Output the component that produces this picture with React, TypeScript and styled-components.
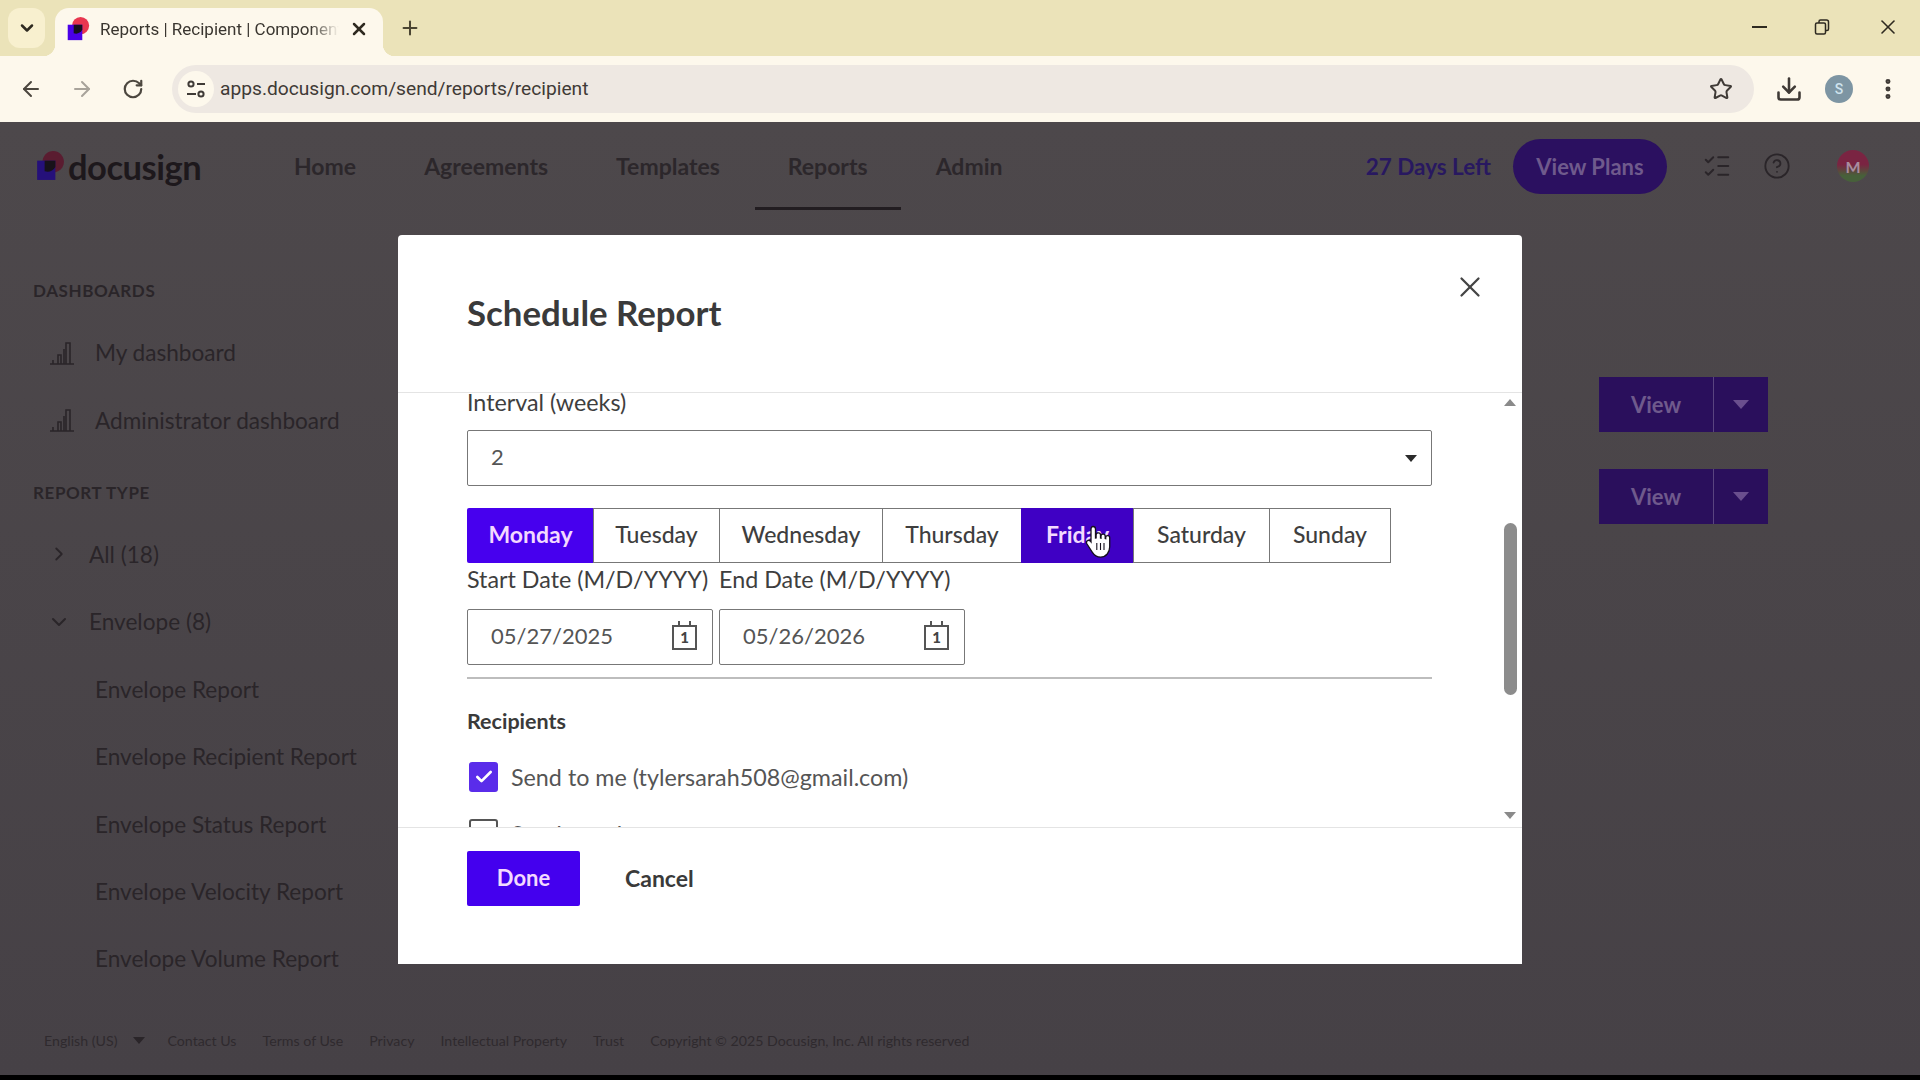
import React from "react";
import styled, { createGlobalStyle } from "styled-components";
import {
  ArrowLeft,
  ArrowRight,
  Check,
  ChevronDown,
  ChevronRight,
  CircleHelp,
  Download,
  EllipsisVertical,
  ListChecks,
  Plus,
  RotateCw,
  Star,
  X,
} from "lucide-react";

const Global = createGlobalStyle`
  html, body { margin: 0; padding: 0; background: #000; }
  * { box-sizing: border-box; }
  body { font-family: Lato, "Liberation Sans", sans-serif; }
`;

const DAYS = [
  { name: "Monday", width: 127, state: "on" },
  { name: "Tuesday", width: 127, state: "off" },
  { name: "Wednesday", width: 164, state: "off" },
  { name: "Thursday", width: 140, state: "off" },
  { name: "Friday", width: 113, state: "hover" },
  { name: "Saturday", width: 137, state: "off" },
  { name: "Sunday", width: 122, state: "off" },
];

const REPORTS = [
  "Envelope Report",
  "Envelope Recipient Report",
  "Envelope Status Report",
  "Envelope Velocity Report",
  "Envelope Volume Report",
];

const FOOTER_LINKS = ["Contact Us", "Terms of Use", "Privacy", "Intellectual Property", "Trust"];

const LogoMark = ({ size, dim }: { size: number; dim?: boolean }) => (
  <svg width={size} height={size} viewBox="0 0 28 28">
    <circle cx="17" cy="10" r="10" fill={dim ? "#5a1c30" : "#e8364f"} />
    <rect x="2" y="9" width="17" height="18" fill={dim ? "#25107a" : "#4a00e8"} />
    <path d="M9 9h10v6a9 9 0 0 1-10 4z" fill={dim ? "#17121a" : "#15101c"} />
  </svg>
);

const BarsIcon = () => (
  <svg width="26" height="26" viewBox="0 0 26 26" fill="none" stroke="#2a2529" strokeWidth="1.6">
    <path d="M1 24h24M4 24v-4M9 24v-9h3v9M15 24V9h0M17 24V3h4v21" />
  </svg>
);

const TuneIcon = () => (
  <svg width="20" height="20" viewBox="0 0 20 20" fill="none" stroke="#3f3a36" strokeWidth="2">
    <circle cx="5" cy="5" r="2.6" />
    <path d="M11 5h8M1 15h9" />
    <circle cx="15" cy="15" r="2.6" />
  </svg>
);

const RestoreIcon = () => (
  <svg width="16" height="16" viewBox="0 0 16 16" fill="none" stroke="#2e2a20" strokeWidth="1.5">
    <rect x="1.5" y="4" width="10" height="11" rx="1.5" />
    <path d="M5 4V2.5A1.5 1.5 0 0 1 6.5 1h6A2 2 0 0 1 14.500 3v7a1.500 1.500 0 0 1-1.500 1.500h-1.500" />
  </svg>
);

const HandCursor = () => (
  <svg width="26" height="36" viewBox="0 0 26 36">
    <path
      d="M8 2.500c1.500 0 2.500 1 2.500 2.500v9l.6-.1V11c0-1.300 1-2.100 2.200-2.100s2.200.9 2.200 2.100v3l.5.1v-2c0-1.200 1-2 2.100-2s2.100.9 2.100 2.100v2.300l.5.1v-1c0-1.100.9-1.900 2-1.900s2 .9 2 2.100v9c0 5.500-3.500 10.300-9 10.300-4.200 0-6.500-1.800-8.500-5L2 20c-.9-1.500-.5-2.800.5-3.400 1.100-.7 2.300-.2 3.100.8l.4.500V5c0-1.500.9-2.500 2-2.500z"
      fill="#fff"
      stroke="#15101c"
      strokeWidth="1.300"
    />
    <path d="M11.800 19v7M15.500 19v7M19 19v7" stroke="#15101c" strokeWidth="1.100" />
  </svg>
);

export default function App() {
  return (
    <Screen>
      <Global />
      <TabStrip>
        <TabSearch>
          <ChevronDown size={20} strokeWidth={3} color="#2e2a20" />
        </TabSearch>
        <Tab>
          <LogoMark size={24} />
          <TabTitle>Reports | Recipient | Component</TabTitle>
          <X size={20} strokeWidth={3} color="#2e2a20" />
        </Tab>
        <NewTab>
          <Plus size={22} strokeWidth={2.2} color="#4a4532" />
        </NewTab>
        <WindowControls>
          <MinimizeBar />
          <RestoreIcon />
          <X size={24} strokeWidth={1.6} color="#2e2a20" />
        </WindowControls>
      </TabStrip>

      <Toolbar>
        <ToolIcon>
          <ArrowLeft size={24} color="#4c473f" strokeWidth={2} />
        </ToolIcon>
        <ToolIcon>
          <ArrowRight size={24} color="#a8a39a" strokeWidth={2} />
        </ToolIcon>
        <ToolIcon>
          <RotateCw size={22} color="#4c473f" strokeWidth={2.4} />
        </ToolIcon>
        <Omnibox>
          <SiteChip>
            <TuneIcon />
          </SiteChip>
          <UrlText>apps.docusign.com/send/reports/recipient</UrlText>
          <Star size={24} color="#3f3a36" strokeWidth={2} />
        </Omnibox>
        <ToolbarEnd>
          <Download size={28} color="#3f3a36" strokeWidth={2.2} />
          <ProfileDot>S</ProfileDot>
          <EllipsisVertical size={26} color="#3f3a36" strokeWidth={2.6} />
        </ToolbarEnd>
      </Toolbar>

      <AppPage>
        <TopNav>
          <Brand>
            <LogoMark size={30} dim />
            <BrandName>docusign</BrandName>
          </Brand>
          <NavList>
            <NavItem>Home</NavItem>
            <NavItem>Agreements</NavItem>
            <NavItem>Templates</NavItem>
            <NavItem $active>Reports</NavItem>
            <NavItem>Admin</NavItem>
          </NavList>
          <NavEnd>
            <DaysLeft>27 Days Left</DaysLeft>
            <PlansButton>View Plans</PlansButton>
            <NavIcon $gap={35}>
              <ListChecks size={30} color="#2a2529" strokeWidth={1.6} />
            </NavIcon>
            <NavIcon $gap={30}>
              <CircleHelp size={28} color="#2a2529" strokeWidth={1.6} />
            </NavIcon>
            <NavAvatar>M</NavAvatar>
          </NavEnd>
        </TopNav>

        <Body>
          <Sidebar>
            <SectionTitle>DASHBOARDS</SectionTitle>
            <SideList>
              <SideRow>
                <BarsIcon />
                My dashboard
              </SideRow>
              <SideRow>
                <BarsIcon />
                Administrator dashboard
              </SideRow>
            </SideList>
            <SectionTitle $top={27}>REPORT TYPE</SectionTitle>
            <SideList>
              <TreeRow>
                <ChevronBox>
                  <ChevronRight size={22} color="#2a2529" strokeWidth={2} />
                </ChevronBox>
                All (18)
              </TreeRow>
              <TreeRow>
                <ChevronBox>
                  <ChevronDown size={24} color="#2a2529" strokeWidth={2} />
                </ChevronBox>
                Envelope (8)
              </TreeRow>
              {REPORTS.map((r) => (
                <SideRow key={r} $indent>
                  {r}
                </SideRow>
              ))}
            </SideList>
          </Sidebar>
          <MainArea>
            {[0, 1].map((i) => (
              <ViewGroup key={i}>
                <ViewButton>View</ViewButton>
                <ViewCaret>
                  <Caret $color="#6a4f8e" />
                </ViewCaret>
              </ViewGroup>
            ))}
          </MainArea>
        </Body>

        <PageFooter>
          <FooterLink>English (US)</FooterLink>
          <FooterCaret>
            <Caret $color="#2a2529" $small />
          </FooterCaret>
          {FOOTER_LINKS.map((l) => (
            <FooterLink key={l}>{l}</FooterLink>
          ))}
          <FooterLink>Copyright © 2025 Docusign, Inc. All rights reserved</FooterLink>
        </PageFooter>

        <Backdrop>
          <Modal>
            <ModalHeader>
              <ModalTitle>Schedule Report</ModalTitle>
              <CloseButton>
                <X size={34} strokeWidth={1.6} color="#444" />
              </CloseButton>
            </ModalHeader>

            <ScrollArea>
              <ModalContent>
                <FieldLabel $after={18}>Interval (weeks)</FieldLabel>
                <SelectBox>
                  <FieldValue>2</FieldValue>
                  <Caret $color="#2b2b2b" $small />
                </SelectBox>
                <DayRow>
                  {DAYS.map((d) => (
                    <DayButton key={d.name} $width={d.width} $state={d.state}>
                      {d.name}
                    </DayButton>
                  ))}
                  <CursorSpot>
                    <HandCursor />
                  </CursorSpot>
                </DayRow>
                <DateRow>
                  <DateField>
                    <FieldLabel $after={20}>Start Date (M/D/YYYY)</FieldLabel>
                    <DateInput>
                      <FieldValue>05/27/2025</FieldValue>
                      <CalendarIcon>1</CalendarIcon>
                    </DateInput>
                  </DateField>
                  <DateField>
                    <FieldLabel $after={20}>End Date (M/D/YYYY)</FieldLabel>
                    <DateInput>
                      <FieldValue>05/26/2026</FieldValue>
                      <CalendarIcon>1</CalendarIcon>
                    </DateInput>
                  </DateField>
                </DateRow>
                <Divider />
                <GroupTitle>Recipients</GroupTitle>
                <CheckRow>
                  <CheckBox $checked>
                    <Check size={20} color="#fff" strokeWidth={3.2} />
                  </CheckBox>
                  Send to me (tylersarah508@gmail.com)
                </CheckRow>
                <CheckRow $top={27}>
                  <CheckBox />
                  Send to others
                </CheckRow>
              </ModalContent>
              <ScrollTrack>
                <ScrollArrow $up />
                <ScrollThumb />
                <ScrollArrow />
              </ScrollTrack>
            </ScrollArea>

            <ModalFooter>
              <DoneButton>Done</DoneButton>
              <CancelButton>Cancel</CancelButton>
            </ModalFooter>
          </Modal>
        </Backdrop>
      </AppPage>
    </Screen>
  );
}

const Screen = styled.div`
  width: 1920px;
  height: 1080px;
  overflow: hidden;
  display: flex;
  flex-direction: column;
  background: #000;
`;

const TabStrip = styled.div`
  height: 56px;
  flex: none;
  display: flex;
  align-items: flex-start;
  padding: 8px 0 0 8px;
  background: #ebe3b9;
`;
const TabSearch = styled.div`
  width: 37px;
  height: 40px;
  border-radius: 12px;
  background: #f8f0cf;
  display: flex;
  align-items: center;
  justify-content: center;
`;
const Tab = styled.div`
  position: relative;
  width: 328px;
  height: 48px;
  margin-left: 10px;
  padding: 0 14px 6px 11px;
  display: flex;
  align-items: center;
  gap: 10px;
  border-radius: 14px 14px 0 0;
  background: #fdf8ec;
  &::before,
  &::after {
    content: "";
    position: absolute;
    bottom: 0;
    width: 12px;
    height: 12px;
  }
  &::before {
    left: -12px;
    background: radial-gradient(circle at 0 0, transparent 12px, #fdf8ec 12.500px);
  }
  &::after {
    right: -12px;
    background: radial-gradient(circle at 100% 0, transparent 12px, #fdf8ec 12.500px);
  }
`;
const TabTitle = styled.div`
  flex: 1;
  overflow: hidden;
  white-space: nowrap;
  font-family: Roboto, sans-serif;
  font-size: 17px;
  color: #3a3630;
  -webkit-mask-image: linear-gradient(to right, #000 88%, transparent 100%);
  mask-image: linear-gradient(to right, #000 88%, transparent 100%);
`;
const NewTab = styled.div`
  margin: 9px 0 0 16px;
  display: flex;
`;
const WindowControls = styled.div`
  margin-left: auto;
  width: 168px;
  height: 38px;
  padding-right: 20px;
  display: flex;
  align-items: center;
  justify-content: space-between;
`;
const MinimizeBar = styled.span`
  width: 15px;
  height: 2px;
  background: #2e2a20;
`;

const Toolbar = styled.div`
  height: 66px;
  flex: none;
  display: flex;
  align-items: center;
  padding: 0 19px 0 5px;
  background: #fdf8ec;
`;
const ToolIcon = styled.div`
  width: 51px;
  display: flex;
  justify-content: center;
`;
const Omnibox = styled.div`
  margin-left: 14px;
  width: 1582px;
  height: 48px;
  display: flex;
  align-items: center;
  padding: 0 21px 0 6px;
  border-radius: 24px;
  background: #eee8e2;
`;
const SiteChip = styled.div`
  width: 36px;
  height: 36px;
  border-radius: 50%;
  background: #fdf8ec;
  display: flex;
  align-items: center;
  justify-content: center;
`;
const UrlText = styled.div`
  flex: 1;
  margin: -2px 0 0 6px;
  font-family: Roboto, sans-serif;
  font-size: 19.200px;
  color: #3f3a36;
`;
const ToolbarEnd = styled.div`
  flex: 1;
  display: flex;
  align-items: center;
  justify-content: space-between;
  padding-left: 21px;
`;
const ProfileDot = styled.div`
  width: 28px;
  height: 28px;
  border-radius: 50%;
  background: #7d95a3;
  color: #cfe3ee;
  display: flex;
  align-items: center;
  justify-content: center;
  font-family: Roboto, sans-serif;
  font-size: 14px;
  font-weight: 500;
`;

const AppPage = styled.div`
  position: relative;
  flex: none;
  height: 953px;
  display: flex;
  flex-direction: column;
  background: linear-gradient(#4d484b, #464146);
`;
const TopNav = styled.div`
  height: 88px;
  flex: none;
  display: flex;
  padding-left: 35px;
`;
const Brand = styled.div`
  width: 226px;
  display: flex;
  align-items: center;
  gap: 3px;
`;
const BrandName = styled.span`
  font-size: 34.500px;
  font-weight: 700;
  letter-spacing: -0.5px;
  color: #1d181c;
`;
const NavList = styled.div`
  display: flex;
`;
const NavItem = styled.div<{ $active?: boolean }>`
  display: flex;
  align-items: center;
  padding: 3px 33px 0;
  margin-right: 2px;
  font-size: 23px;
  font-weight: 700;
  color: #2c272b;
  border-bottom: 3px solid ${(p) => (p.$active ? "#221d21" : "transparent")};
`;
const NavEnd = styled.div`
  margin-left: auto;
  padding: 0 51px 0 0;
  display: flex;
  align-items: center;
`;
const DaysLeft = styled.div`
  font-size: 22.500px;
  font-weight: 700;
  color: #281860;
`;
const PlansButton = styled.div`
  width: 154px;
  height: 55px;
  margin-left: 22px;
  border-radius: 28px;
  background: #2b1060;
  color: #6f5a8c;
  display: flex;
  align-items: center;
  justify-content: center;
  font-size: 22px;
  font-weight: 700;
`;
const NavIcon = styled.div<{ $gap: number }>`
  width: 30px;
  margin-left: ${(p) => p.$gap}px;
  display: flex;
  justify-content: center;
`;
const NavAvatar = styled.div`
  width: 32px;
  height: 32px;
  margin-left: 45px;
  border-radius: 50%;
  background: linear-gradient(#7a2442 45%, #47603a 80%);
  color: #a98da0;
  display: flex;
  align-items: center;
  justify-content: center;
  font-size: 16px;
  font-weight: 700;
`;

const Body = styled.div`
  flex: 1;
  min-height: 0;
  display: flex;
  overflow: hidden;
`;
const Sidebar = styled.div`
  width: 398px;
  flex: none;
  padding: 69px 0 0 33px;
`;
const SectionTitle = styled.div<{ $top?: number }>`
  margin-top: ${(p) => p.$top || 0}px;
  line-height: 24px;
  font-size: 17px;
  font-weight: 700;
  letter-spacing: 0.6px;
  color: #2a2529;
`;
const SideList = styled.div`
  margin-top: 16px;
`;
const SideRow = styled.div<{ $indent?: boolean }>`
  height: 67.400px;
  display: flex;
  align-items: center;
  gap: 20px;
  padding-left: ${(p) => (p.$indent ? 62 : 16)}px;
  font-size: 22.600px;
  color: #2a2529;
`;
const TreeRow = styled(SideRow)`
  gap: 18px;
  padding-left: 14px;
`;
const ChevronBox = styled.span`
  width: 24px;
  display: flex;
  justify-content: center;
`;
const MainArea = styled.div`
  flex: 1;
  display: flex;
  flex-direction: column;
  align-items: flex-end;
  gap: 37px;
  padding: 167px 152px 0 0;
`;
const ViewGroup = styled.div`
  display: flex;
  height: 55px;
`;
const ViewButton = styled.div`
  width: 114px;
  display: flex;
  align-items: center;
  justify-content: center;
  background: #2a0f5c;
  color: #6f5a8c;
  font-size: 22px;
  font-weight: 700;
`;
const ViewCaret = styled.div`
  width: 55px;
  display: flex;
  align-items: center;
  justify-content: center;
  background: #2a0f5c;
  border-left: 1px solid #5a4480;
`;
const Caret = styled.span<{ $color: string; $small?: boolean }>`
  width: 0;
  height: 0;
  border-left: ${(p) => (p.$small ? 6 : 8)}px solid transparent;
  border-right: ${(p) => (p.$small ? 6 : 8)}px solid transparent;
  border-top: ${(p) => (p.$small ? 7 : 9)}px solid ${(p) => p.$color};
`;
const PageFooter = styled.div`
  height: 65px;
  flex: none;
  display: flex;
  align-items: center;
  gap: 26px;
  padding: 0 0 4px 44px;
`;
const FooterCaret = styled.span`
  display: flex;
  margin: 0 -4px 0 -10px;
`;
const FooterLink = styled.span`
  font-size: 14.200px;
  color: #2f2a2e;
`;

const Backdrop = styled.div`
  position: absolute;
  inset: 0;
  padding-top: 2px;
  display: flex;
  align-items: center;
  justify-content: center;
`;
const Modal = styled.div`
  position: relative;
  width: 1124px;
  height: 729px;
  display: flex;
  flex-direction: column;
  background: #fff;
  border-radius: 4px;
`;
const ModalHeader = styled.div`
  height: 158px;
  flex: none;
  display: flex;
  justify-content: space-between;
  align-items: flex-start;
  padding: 0 35px 0 69px;
  border-bottom: 1px solid #e4e4e4;
`;
const ModalTitle = styled.h2`
  margin: 0;
  line-height: 155px;
  font-size: 34.800px;
  font-weight: 700;
  color: #3a3a3a;
`;
const CloseButton = styled.div`
  margin-top: 35px;
  display: flex;
`;
const ScrollArea = styled.div`
  flex: 1;
  min-height: 0;
  display: flex;
`;
const ModalContent = styled.div`
  flex: 1;
  min-width: 0;
  overflow: hidden;
  padding: 0 68px 0 69px;
`;
const FieldLabel = styled.div<{ $after: number }>`
  margin-top: -1px;
  line-height: 20px;
  margin-bottom: ${(p) => p.$after}px;
  font-size: 23.300px;
  color: #3e3e3e;
  white-space: nowrap;
`;
const FieldValue = styled.span`
  margin-top: -3px;
  font-size: 22px;
  color: #555;
`;
const SelectBox = styled.div`
  height: 56px;
  display: flex;
  align-items: center;
  justify-content: space-between;
  padding: 0 14px 0 23px;
  border: 1.500px solid #777;
  border-radius: 2px;
`;
const DayRow = styled.div`
  position: relative;
  margin-top: 22px;
  height: 55px;
  display: flex;
`;
const DayButton = styled.div<{ $width: number; $state: string }>`
  width: ${(p) => p.$width}px;
  display: flex;
  align-items: center;
  justify-content: center;
  margin-left: -1px;
  padding-bottom: 3px;
  font-size: 23px;
  font-weight: ${(p) => (p.$state === "off" ? 500 : 700)};
  color: ${(p) => (p.$state === "off" ? "#3e3e3e" : "#f3d9ff")};
  background: ${(p) => (p.$state === "on" ? "#4700ee" : p.$state === "hover" ? "#3f00c4" : "#fff")};
  border: 1.500px solid ${(p) => (p.$state === "off" ? "#777" : "transparent")};
  &:first-child { margin-left: 0; border-radius: 2px 0 0 2px; }
`;
const CursorSpot = styled.div`
  position: absolute;
  left: 618px;
  top: 16px;
  pointer-events: none;
`;
const DateRow = styled.div`
  margin-top: 7px;
  display: flex;
  gap: 6px;
`;
const DateField = styled.div`
  width: 246px;
`;
const DateInput = styled.div`
  height: 56px;
  display: flex;
  align-items: center;
  justify-content: space-between;
  padding: 0 15px 0 23px;
  border: 1.500px solid #777;
  border-radius: 2px;
`;
const CalendarIcon = styled.span`
  position: relative;
  width: 25px;
  height: 25px;
  border: 2.500px solid #555;
  display: flex;
  align-items: center;
  justify-content: center;
  font-size: 15px;
  font-weight: 900;
  color: #444;
  &::before,
  &::after {
    content: "";
    position: absolute;
    top: -6px;
    width: 2px;
    height: 4px;
    background: #555;
  }
  &::before { left: 4px; }
  &::after { right: 4px; }
`;
const Divider = styled.div`
  margin-top: 12px;
  height: 2px;
  background: #bdbdbd;
`;
const GroupTitle = styled.div`
  margin-top: 30px;
  line-height: 24px;
  font-size: 21.500px;
  font-weight: 700;
  color: #3a3a3a;
`;
const CheckRow = styled.div<{ $top?: number }>`
  margin-top: ${(p) => p.$top || 29}px;
  height: 30px;
  display: flex;
  align-items: center;
  gap: 13px;
  padding-left: 2px;
  font-size: 23.300px;
  color: #555;
`;
const CheckBox = styled.span<{ $checked?: boolean }>`
  width: 29px;
  height: 30px;
  flex: none;
  display: flex;
  align-items: center;
  justify-content: center;
  border-radius: 3px;
  background: ${(p) => (p.$checked ? "#5a2cea" : "#fff")};
  border: ${(p) => (p.$checked ? "none" : "2px solid #555")};
`;
const ScrollTrack = styled.div`
  width: 22px;
  flex: none;
  padding: 6px 5px 8px 3px;
  display: flex;
  flex-direction: column;
  align-items: center;
  background: #fff;
`;
const ScrollArrow = styled.span<{ $up?: boolean }>`
  width: 0;
  height: 0;
  border-left: 6px solid transparent;
  border-right: 6px solid transparent;
  ${(p) => (p.$up ? "border-bottom: 7px solid #8a8a8a;" : "border-top: 7px solid #8a8a8a; margin-top: auto;")}
`;
const ScrollThumb = styled.div`
  width: 13px;
  height: 172px;
  margin-top: 117px;
  border-radius: 7px;
  background: #8c8c8c;
`;
const ModalFooter = styled.div`
  height: 137px;
  flex: none;
  display: flex;
  align-items: flex-start;
  padding: 23px 0 0 69px;
  border-top: 1px solid #e4e4e4;
  background: #fff;
`;
const DoneButton = styled.div`
  width: 113px;
  height: 55px;
  padding-bottom: 2px;
  display: flex;
  align-items: center;
  justify-content: center;
  border-radius: 2px;
  background: #4400ee;
  color: #f3d9ff;
  font-size: 22px;
  font-weight: 700;
`;
const CancelButton = styled.div`
  height: 55px;
  margin-left: 45px;
  padding-bottom: 2px;
  display: flex;
  align-items: center;
  font-size: 23px;
  font-weight: 700;
  color: #3a3a3a;
`;
